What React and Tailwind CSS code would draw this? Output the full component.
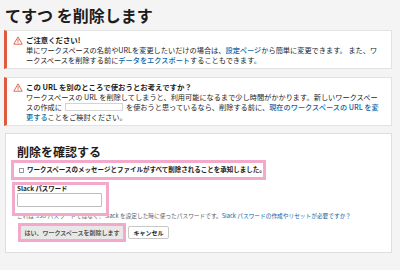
import React from 'react'

const font = { fontFamily: '"Noto Sans CJK JP", "Noto Sans", sans-serif' }

const Warn = () => (
    <svg width="10" height="9" viewBox="0 0 20 18" className="shrink-0 mt-[1px]">
        <path d="M10 1.8 L18.4 16.4 H1.6 Z" fill="none" stroke="#df5a3e" strokeWidth="1.8" strokeLinejoin="round" />
        <path d="M10 7 V11" stroke="#df5a3e" strokeWidth="1.8" strokeLinecap="round" />
        <circle cx="10" cy="13.6" r="1.1" fill="#df5a3e" />
    </svg>
)

const Link = ({ children }) => (
    <span className="text-[#1264a3] font-medium">{children}</span>
)

const Notice = ({ title, children, height }) => (
    <div className={`bg-white border border-[#e2e2e2] border-l-[3px] border-l-[#df5a3e] flex gap-[3px] pl-[6px] pt-[4px] ${height}`}>
        <Warn />
        <div className="text-[7.2px] leading-[10px] text-[#1d1c1d] whitespace-nowrap">
            <div className="font-bold text-[7.4px]">{title}</div>
            {children}
        </div>
    </div>
)

const App = () => {
    return (
        <div className="w-[400px] h-[270px] bg-[#f4f4f4] pl-[4px] pr-[8px] pt-[6px] overflow-hidden" style={font}>
            <h1 className="ml-[1px] text-[16px] leading-[18px] font-bold text-[#1d1c1d]">てすつ を削除します</h1>

            <div className="mt-[6px]">
                <Notice title="ご注意ください!" height="h-[39px]">
                    <div>単にワークスペースの名前やURLを変更したいだけの場合は、<Link>設定ページ</Link>から簡単に変更できます。 また、ワ</div>
                    <div>ークスペースを削除する前に<Link>データをエクスポート</Link>することもできます。</div>
                </Notice>
            </div>

            <div className="mt-[8px]">
                <Notice title="この URL を別のところで使おうとお考えですか？" height="h-[49px]">
                    <div>ワークスペースの URL を削除してしまうと、利用可能になるまで少し時間がかかります。新しいワークスペー</div>
                    <div className="flex items-center">
                        スの作成に
                        <span className="inline-block w-[58px] h-[8px] border border-[#d4d4d4] mx-[3px]" />
                        を使おうと思っているなら、削除する前に、<Link>現在のワークスペースの URL を変</Link>
                    </div>
                    <div><Link>更する</Link>ことをご検討ください。</div>
                </Notice>
            </div>

            <div className="mt-[7px] ml-[1px] h-[120px] bg-white border border-[#dedede] pt-[11px] pl-[5px]">
                <h2 className="ml-[6px] text-[12px] leading-[14px] font-bold text-[#1d1c1d]">削除を確認する</h2>

                <div className="mt-[1px] w-[255px] h-[20px] border-[3px] border-[#f3a9c9] flex items-center pl-[5px] gap-[3px]">
                    <span className="w-[5px] h-[5px] border border-[#9a9a9a] shrink-0" />
                    <span className="text-[6.5px] font-bold text-[#1d1c1d] whitespace-nowrap">ワークスペースのメッセージとファイルがすべて削除されることを承知しました。</span>
                </div>

                <div className="relative z-10 mt-[2px] ml-[1px] w-[97px] h-[34px] border-[3px] border-[#f3a9c9] pl-[2px]">
                    <div className="text-[6.4px] leading-[7px] font-bold text-[#1d1c1d] whitespace-nowrap">Slack パスワード</div>
                    <div className="mt-[1px] w-[85px] h-[14px] border border-[#bdbdbd] rounded-[1px] bg-white" />
                </div>

                <div className="mt-[-4px] ml-[6px] text-[5.7px] leading-[8px] text-[#616061] whitespace-nowrap">
                    これは SSO パスワードではなく、Slack を設定した時に使ったパスワードです。<span className="text-[#1264a3]">Slack パスワードの作成やリセットが必要ですか？</span>
                </div>

                <div className="mt-[3px] ml-[7px] flex items-center gap-[2px]">
                    <div className="w-[108px] h-[19px] border-[3px] border-[#f3a9c9]">
                        <div className="h-full bg-[#e8e8e8] rounded-[1px] flex items-center justify-center text-[6px] font-bold text-[#555555] whitespace-nowrap">
                            はい、ワークスペースを削除します
                        </div>
                    </div>
                    <div className="w-[41px] h-[13px] border border-[#c8c8c8] rounded-[2px] bg-white flex items-center justify-center text-[6px] font-bold text-[#1d1c1d]">
                        キャンセル
                    </div>
                </div>
            </div>
        </div>
    )
}

export default App
